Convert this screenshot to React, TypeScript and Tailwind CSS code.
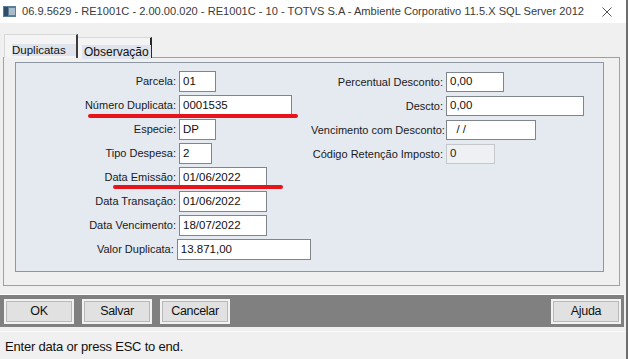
import React from 'react';

const LEFT_FIELDS = [
  { label: 'Parcela:', value: '01', w: 'w-[37px]' },
  { label: 'Número Duplicata:', value: '0001535', w: 'w-[113px]' },
  { label: 'Especie:', value: 'DP', w: 'w-[37px]' },
  { label: 'Tipo Despesa:', value: '2', w: 'w-[33px]' },
  { label: 'Data Emissão:', value: '01/06/2022', w: 'w-[88px]' },
  { label: 'Data Transação:', value: '01/06/2022', w: 'w-[88px]' },
  { label: 'Data Vencimento:', value: '18/07/2022', w: 'w-[88px]' },
  { label: 'Valor Duplicata:', value: '13.871,00', w: 'w-[136px]' },
];

const RIGHT_FIELDS = [
  { label: 'Percentual Desconto:', value: '0,00', w: 'w-[58px]' },
  { label: 'Descto:', value: '0,00', w: 'w-[138px]' },
  { label: 'Vencimento com Desconto:', value: '  / /', w: 'w-[90px]' },
  { label: 'Código Retenção Imposto:', value: '0', w: 'w-[49px]', disabled: true },
];

function Field({ label, value, w, labelW, h, disabled }: { label: string; value: string; w: string; labelW: string; h: string; disabled?: boolean }) {
  return (
    <div className="flex items-center gap-[3px]">
      <div className={`${labelW} text-right text-[11px] text-[#1a1a1a] whitespace-nowrap`}>{label}</div>
      <div
        className={`${w} ${h} flex items-center pl-[3px] text-[11.5px] whitespace-pre ${
          disabled ? 'bg-[#eef0f3] border border-[#c4c8cc] text-[#222]' : 'bg-white border border-[#7f858c] text-[#111]'
        }`}
      >
        {value}
      </div>
    </div>
  );
}

function WinButton({ children, className = '' }: { children: React.ReactNode; className?: string }) {
  return (
    <div
      className={`w-[70px] h-[25px] flex items-center justify-center bg-[#e1e1e1] border-2 border-[#f2f2f2] shadow-[inset_0_0_0_1px_#b9b9b9] text-[12.5px] tracking-[-0.3px] text-[#111] ${className}`}
    >
      {children}
    </div>
  );
}

export default function App() {
  return (
    <div
      className="relative w-[628px] h-[359px] overflow-hidden bg-[#f0f0f0] border-r-2 border-[#6e6e6e]"
      style={{ fontFamily: '"Liberation Sans", Arial, sans-serif' }}
    >
      {/* title bar */}
      <div className="h-[23px] bg-white flex items-center pl-[3px] pr-[14px]">
        <svg width="13" height="11" viewBox="0 0 13 11" className="shrink-0">
          <rect x="0" y="0" width="13" height="11" fill="#5d7c95" />
          <rect x="1" y="1" width="4" height="9" fill="#2f4d6a" />
          <rect x="6" y="2" width="6" height="7" fill="#a9bccb" />
        </svg>
        <div className="ml-[6px] min-w-0 overflow-hidden text-[11.1px] text-[#3a3a3a] whitespace-nowrap flex-1">
          06.9.5629 - RE1001C - 2.00.00.020 - RE1001C - 10 - TOTVS S.A - Ambiente Corporativo 11.5.X SQL Server 2012
        </div>
        <svg width="10" height="10" viewBox="0 0 10 10" className="shrink-0">
          <path d="M0.5 0.5 L9.5 9.5 M9.5 0.5 L0.5 9.5" stroke="#555" strokeWidth="1" />
        </svg>
      </div>

      {/* tabs */}
      <div className="flex items-end pl-[4px] mt-[11px] h-[24px] relative z-10">
        <div className="w-[74px] h-[24px] bg-[#f4f4f4] border-t border-l border-[#d8d8d8] border-r-2 border-r-[#3c3c3c] pt-[2px] pl-[7px]">
          <span className="bg-[#dfe4ec] pr-[10px] text-[11.5px] text-[#111]">Duplicatas</span>
        </div>
        <div className="w-[74px] h-[21px] bg-[#f4f4f4] border-t border-[#d8d8d8] border-r-2 border-r-[#2a2a2a] pt-[1px] pl-[4px]">
          <span className="bg-[#dfe4ec] px-[2px] text-[12px] text-[#111]">Observação</span>
        </div>
      </div>

      {/* tab panel */}
      <div className="ml-[3px] w-[617px] h-[229px] -mt-[1px] border border-[#a0a0a0] bg-[#f0f0f0] pt-[4px] pl-[11px] pr-[15px] pb-[13px]">
        <div className="h-full bg-[#e5e9f0] border border-[#8d97a3] flex pt-[8px]">
          <div className="w-[295px] flex flex-col gap-[3px]">
            {LEFT_FIELDS.map((f) => (
              <Field key={f.label} {...f} labelW="w-[160px]" h="h-[21px]" />
            ))}
          </div>
          <div className="flex flex-col gap-[4px] pt-[1px]">
            {RIGHT_FIELDS.map((f) => (
              <Field key={f.label} {...f} labelW="w-[132px]" h="h-[20px]" />
            ))}
          </div>
        </div>
      </div>

      {/* red annotation marks */}
      <div className="absolute left-[88px] top-[114px] w-[210px] h-[4px] rounded-full bg-[#e8141c]" />
      <div className="absolute left-[113px] top-[185px] w-[170px] h-[4px] rounded-full bg-[#e8141c]" />

      {/* button bar */}
      <div className="mt-[8px] border-t border-white w-[624px]">
        <div className="h-[32px] bg-[#808080] flex items-center pl-[4px] pr-[3px] gap-[7px]">
          <WinButton>OK</WinButton>
          <WinButton className="ml-[1px]">Salvar</WinButton>
          <WinButton className="ml-[1px]">Cancelar</WinButton>
          <div className="flex-1" />
          <WinButton>Ajuda</WinButton>
        </div>
      </div>

      {/* status bar */}
      <div className="mt-[4px] border-t border-[#fafafa] pt-[2px] pl-[5px]">
        <span className="text-[13px] tracking-[-0.2px] text-[#111]">Enter data or press ESC to end.</span>
      </div>
    </div>
  );
}
